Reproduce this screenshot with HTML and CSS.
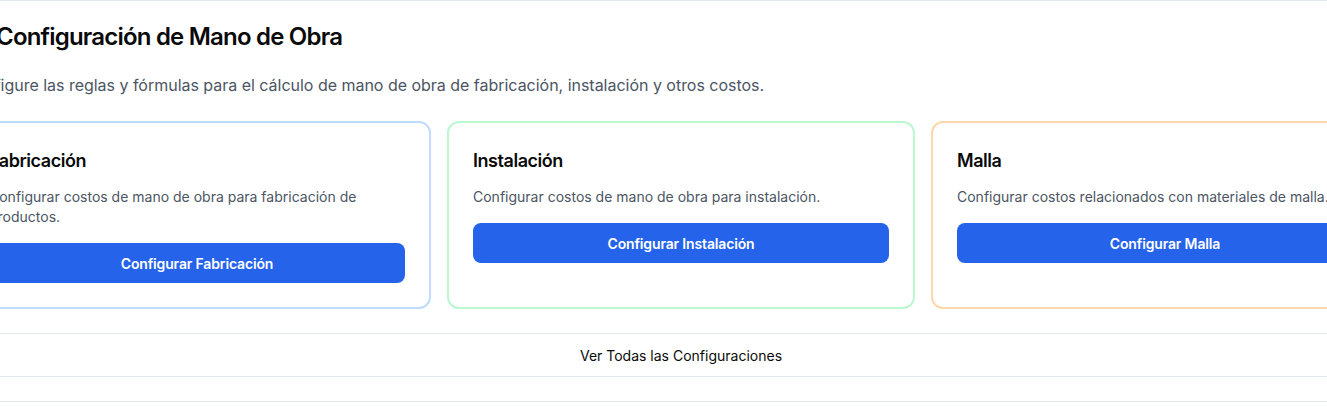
FILE: index.html
```html
<!DOCTYPE html>
<html lang="es">
<head>
<meta charset="utf-8">
<title>Configuración de Mano de Obra</title>
<link rel="stylesheet" href="styles.css">
</head>
<body>
<div class="page">
  <header class="header">
    <div class="title-row">
      <svg class="title-icon" width="24" height="24" viewBox="0 0 24 24" fill="none" stroke="currentColor" stroke-width="2" stroke-linecap="round" stroke-linejoin="round"><path d="M14.7 6.3a1 1 0 0 0 0 1.4l1.6 1.6a1 1 0 0 0 1.4 0l3.77-3.77a6 6 0 0 1-7.94 7.94l-6.91 6.91a2.12 2.12 0 0 1-3-3l6.91-6.91a6 6 0 0 1 7.94-7.94l-3.76 3.76z"/></svg>
      <h1 class="title">Configuración de Mano de Obra</h1>
    </div>
    <p class="subtitle">Configure las reglas y fórmulas para el cálculo de mano de obra de fabricación, instalación y otros costos.</p>
  </header>

  <section class="cards">
    <div class="card card-blue">
      <h2 class="card-title">Fabricación</h2>
      <p class="card-desc">Configurar costos de mano de obra para fabricación de productos.</p>
      <button class="card-btn">Configurar Fabricación</button>
    </div>
    <div class="card card-green">
      <h2 class="card-title">Instalación</h2>
      <p class="card-desc">Configurar costos de mano de obra para instalación.</p>
      <button class="card-btn">Configurar Instalación</button>
    </div>
    <div class="card card-orange">
      <h2 class="card-title">Malla</h2>
      <p class="card-desc">Configurar costos relacionados con materiales de malla.</p>
      <button class="card-btn">Configurar Malla</button>
    </div>
  </section>

  <div class="footer">
    <button class="all-btn">Ver Todas las Configuraciones</button>
  </div>
  <div class="next-section"></div>
</div>
</body>
</html>
```

FILE: styles.css
```css
* {
  box-sizing: border-box;
}

html, body {
  margin: 0;
  padding: 0;
  background: #ffffff;
  overflow: hidden;
}

body {
  font-family: Inter, "Noto Sans", Arial, sans-serif;
  color: #0f172a;
  border-top: 1px solid #e2e8f0;
}

.page {
  margin-left: -37px;
  width: 1436px;
}

.header {
  padding-top: 20px;
}

.title-row {
  display: flex;
  align-items: center;
  gap: 9px;
  height: 32px;
}

.title-icon {
  color: #2563eb;
  flex: none;
}

.title {
  margin: 0;
  font-size: 24px;
  line-height: 32px;
  font-weight: 600;
  color: #0a0a0a;
  letter-spacing: -0.8px;
}

.subtitle {
  margin: 20px 0 0 1px;
  font-size: 16px;
  line-height: 24px;
  color: #4b5563;
  letter-spacing: -0.02px;
}

.cards {
  margin-top: 24px;
  display: grid;
  grid-template-columns: repeat(3, 468px);
  column-gap: 16px;
}

.card {
  border: 2px solid #bfdbfe;
  border-radius: 12px;
  padding: 24px;
  display: flex;
  flex-direction: column;
  background: #fff;
}

.card-blue { border-color: #bfdbfe; }
.card-green { border-color: #bbf7d0; }
.card-orange { border-color: #fed7aa; }

.card-title {
  margin: 0;
  font-size: 18px;
  line-height: 28px;
  font-weight: 600;
  color: #0a0a0a;
  letter-spacing: -0.45px;
}

.card-desc {
  margin: 12px 0 16px;
  font-size: 14px;
  line-height: 20px;
  color: #4b5563;
}

.card-btn {
  height: 40px;
  border: none;
  border-radius: 8px;
  background: #2563eb;
  color: #ffffff;
  font-family: Inter, "Noto Sans", Arial, sans-serif;
  font-size: 14px;
  font-weight: 600;
  letter-spacing: -0.15px;
  cursor: pointer;
}

.footer {
  margin-top: 24px;
  border-top: 1px solid #e2e8f0;
  border-bottom: 1px solid #e2e8f0;
  height: 44px;
  display: flex;
  align-items: center;
  justify-content: center;
}

.all-btn {
  border: none;
  background: transparent;
  font-family: Inter, "Noto Sans", Arial, sans-serif;
  font-size: 14px;
  font-weight: 400;
  color: #0a0a0a;
  padding: 0;
}

.next-section {
  margin-top: 24px;
  border-top: 1px solid #e2e8f0;
  height: 10px;
}
```
